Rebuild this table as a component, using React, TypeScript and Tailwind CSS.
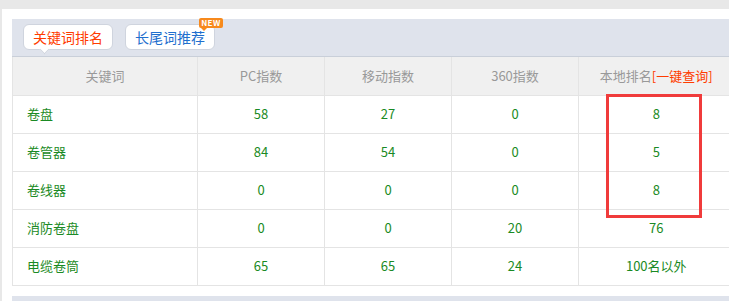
import React from "react";

const rows = [
  { kw: "卷盘", pc: "58", mob: "27", s360: "0", rank: "8" },
  { kw: "卷管器", pc: "84", mob: "54", s360: "0", rank: "5" },
  { kw: "卷线器", pc: "0", mob: "0", s360: "0", rank: "8" },
  { kw: "消防卷盘", pc: "0", mob: "0", s360: "20", rank: "76" },
  { kw: "电缆卷筒", pc: "65", mob: "65", s360: "24", rank: "100名以外" },
];

export default function App() {
  return (
    <div
      className="h-[301px] w-full overflow-hidden bg-[#e8e8e8] pl-[2px] pt-[9px] text-[13px]"
      style={{ fontFamily: '"Microsoft YaHei", "Noto Sans CJK SC", sans-serif' }}
    >
      <div className="relative h-full bg-white pl-[10px] pt-[10px]">
        {/* tabs */}
        <div className="flex h-[38px] items-start gap-[12px] border-b border-[#c9cfd9] bg-[#dfe3ec] pl-[11px] pt-[5px]">
          <div className="relative flex h-[26px] w-[90px] items-center justify-center rounded-[6px] border border-[#cfd4de] bg-white text-[14px] text-[#ff3c00]">
            关键词排名
            <div className="absolute bottom-[-4px] left-[17px] h-[7px] w-[7px] rotate-45 border-b border-r border-[#cfd4de] bg-white" />
          </div>
          <div className="relative flex h-[26px] w-[90px] items-center justify-center rounded-[6px] border border-[#cfd4de] bg-white text-[14px] text-[#1f6fce]">
            长尾词推荐
            <div className="absolute right-[-9px] top-[-7px] flex h-[10px] w-[24px] items-center justify-center rounded-[2px] bg-[#f7891c] text-[8px] font-bold leading-none tracking-[0.5px] text-white">
              NEW
              <div className="absolute bottom-[-3px] left-[2px] h-0 w-0 border-l-[3px] border-r-[3px] border-t-[3px] border-l-transparent border-r-transparent border-t-[#f7891c]" />
            </div>
          </div>
        </div>

        {/* table */}
        <table className="w-[717px] table-fixed border-collapse">
          <colgroup>
            <col className="w-[185px]" />
            <col className="w-[127px]" />
            <col className="w-[127px]" />
            <col className="w-[127px]" />
            <col className="w-[151px]" />
          </colgroup>
          <thead>
            <tr className="h-[38px] bg-[#f0f0f0] text-[#999999]">
              <th className="border-l border-r border-b border-[#e4e4e4] font-normal">关键词</th>
              <th className="border-r border-b border-[#e4e4e4] font-normal">PC指数</th>
              <th className="border-r border-b border-[#e4e4e4] font-normal">移动指数</th>
              <th className="border-r border-b border-[#e4e4e4] font-normal">360指数</th>
              <th className="border-b border-[#e4e4e4] pl-[4px] font-normal">
                本地排名<span className="text-[#ff3c00]">[一键查询]</span>
              </th>
            </tr>
          </thead>
          <tbody className="text-[#1a8a24]">
            {rows.map((r) => (
              <tr key={r.kw} className="h-[38px]">
                <td className="border border-[#e4e4e4] pl-[14px]">{r.kw}</td>
                <td className="border border-[#e4e4e4] text-center">{r.pc}</td>
                <td className="border border-[#e4e4e4] text-center">{r.mob}</td>
                <td className="border border-[#e4e4e4] text-center">{r.s360}</td>
                <td className="border-b border-[#e4e4e4] pl-[4px] text-center">{r.rank}</td>
              </tr>
            ))}
          </tbody>
        </table>

        <div className="mt-[10px] h-[20px] bg-[#dfe3ec]" />

        {/* highlight box */}
        <div className="absolute left-[604px] top-[85px] h-[124px] w-[96px] border-[3px] border-[#f03b3b]" />
      </div>
    </div>
  );
}
